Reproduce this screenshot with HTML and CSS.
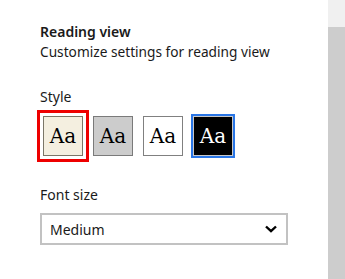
FILE: index.html
```html
<!DOCTYPE html>
<html>
<head>
<meta charset="utf-8">
<link rel="stylesheet" href="styles.css">
</head>
<body>
<div class="page">
  <main class="panel">
    <h1 class="title">Reading view</h1>
    <p class="subtitle">Customize settings for reading view</p>
    <div class="label style-label">Style</div>
    <div class="styles">
      <button class="swatch cream selected">Aa</button>
      <button class="swatch grey">Aa</button>
      <button class="swatch white">Aa</button>
      <button class="swatch black focused">Aa</button>
    </div>
    <div class="label size-label">Font size</div>
    <div class="select">
      <span class="select-text">Medium</span>
      <svg class="chevron" width="12" height="8" viewBox="0 0 12 8"><path d="M1 1.5 L6 6.2 L11 1.5" fill="none" stroke="#000" stroke-width="2.4"/></svg>
    </div>
  </main>
  <div class="scrollbar">
    <div class="scroll-top"></div>
    <div class="scroll-thumb"></div>
  </div>
</div>
</body>
</html>
```
FILE: styles.css
```css
html, body {
  margin: 0;
  padding: 0;
  background: #fff;
}
body {
  font-family: "Noto Sans", "Open Sans", sans-serif;
  color: #000;
  width: 345px;
  height: 279px;
  overflow: hidden;
}
.page {
  display: flex;
  height: 279px;
}
.panel {
  flex: 1;
  padding: 22px 0 0 40px;
}
.title {
  margin: 0;
  font-size: 14px;
  font-weight: 600;
  line-height: 20px;
  color: #1a1a1a;
}
.subtitle {
  margin: 0;
  font-size: 13.7px;
  line-height: 20px;
  color: #1a1a1a;
}
.label {
  font-size: 14px;
  line-height: 20px;
  color: #1a1a1a;
}
.style-label {
  margin-top: 25px;
}
.styles {
  display: flex;
  gap: 10px;
  margin: 9px 0 0 3px;
}
.swatch {
  width: 40px;
  height: 40px;
  box-sizing: border-box;
  padding: 0;
  border: 1px solid #7f7f7f;
  font-family: "DejaVu Serif", "Liberation Serif", serif;
  font-size: 20px;
  line-height: 38px;
  color: #000;
}
.cream { background: #f4efe0; border-color: #7a7668; }
.grey { background: #cccccc; border-color: #7a7a7a; }
.white { background: #ffffff; border-color: #808080; }
.black { background: #000; color: #fff; border-color: #c8c8c8; }
.selected {
  outline: 3px solid #ee0000;
  outline-offset: 3px;
}
.focused {
  outline: 2px solid #2a76e6;
  outline-offset: 0;
}
.size-label {
  margin-top: 29px;
}
.select {
  display: flex;
  align-items: center;
  justify-content: space-between;
  box-sizing: border-box;
  width: 248px;
  height: 32px;
  margin-top: 8px;
  border: 2px solid #c2c2c2;
  padding: 0 9px 0 8px;
}
.select-text {
  font-size: 14px;
  color: #1a1a1a;
}
.chevron {
  display: block;
}
.scrollbar {
  width: 17px;
  display: flex;
  flex-direction: column;
}
.scroll-top {
  height: 27px;
  background: #f0f0f0;
}
.scroll-thumb {
  flex: 1;
  background: #cdcdcd;
}
```
